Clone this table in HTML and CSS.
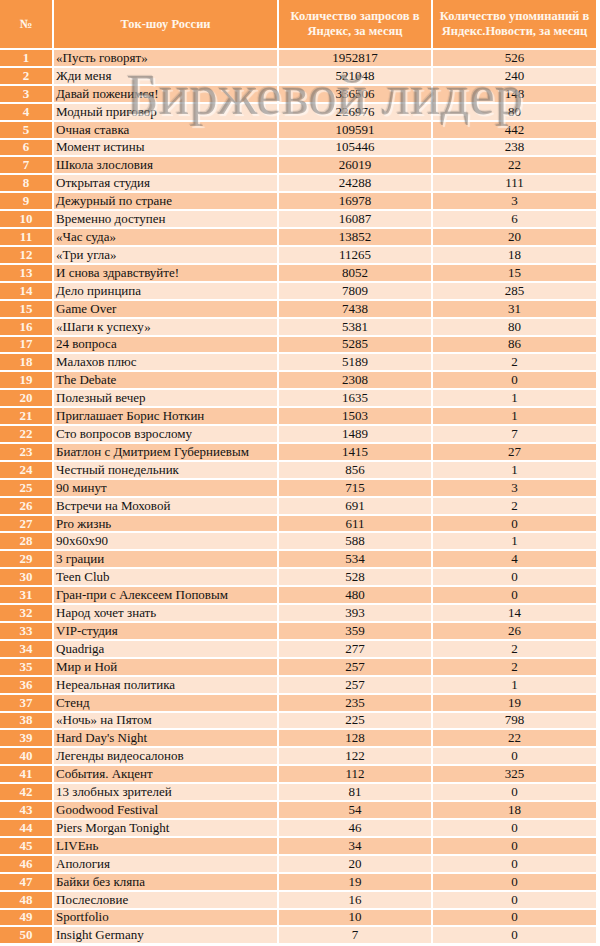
FILE: index.html
```html
<!DOCTYPE html>
<html lang="ru">
<head>
<meta charset="utf-8">
<title>Ток-шоу России</title>
<link rel="stylesheet" href="styles.css">
</head>
<body>
<div class="wrap">
  <div class="table" id="table">
    <div class="h">№</div>
    <div class="h">Ток-шоу России</div>
    <div class="h">Количество запросов в Яндекс, за месяц</div>
    <div class="h">Количество упоминаний в Яндекс.Новости, за месяц</div>
  </div>
  <div class="watermark">Биржевой лидер</div>
</div>
<script src="script.js"></script>
</body>
</html>
```
FILE: styles.css
```css
html, body { margin: 0; padding: 0; background: #fff; }
body { font-family: "Liberation Serif", "Times New Roman", serif; }
.wrap { position: relative; width: 600px; height: 946px; overflow: hidden; }
.table {
  display: grid;
  width: 596px;
  grid-template-columns: 52px 223px 152px 163px;
  grid-template-rows: 48px repeat(50, 15.92px);
  gap: 2px;
}
.h {
  background: #f79646;
  color: #fff6ec;
  font-weight: bold;
  font-size: 12.5px;
  line-height: 15px;
  display: flex;
  align-items: center;
  justify-content: center;
  text-align: center;
  padding: 0;
}
.c {
  font-size: 13px;
  line-height: 16px;
  color: #111;
  white-space: nowrap;
  display: flex;
  align-items: center;
  overflow: hidden;
}
.c.odd { background: #fbc9a4; }
.c.even { background: #fde4d2; }
.c.n {
  background: #f79646;
  color: #fff3e6;
  font-weight: bold;
  justify-content: center;
}
.c.t { padding-left: 2px; }
.c.v { justify-content: center; }
.watermark {
  position: absolute;
  left: 126px;
  top: 62px;
  font-family: "Liberation Serif", "Times New Roman", serif;
  font-size: 57px;
  color: rgba(105, 105, 105, 0.42);
  text-shadow: 2px 2px 1px rgba(255,255,255,0.55), -1px -1px 1px rgba(80,80,80,0.2);
  pointer-events: none;
  white-space: nowrap;
}
```
FILE: script.js
```js
const rows = [
["«Пусть говорят»",1952817,526],["Жди меня",521048,240],["Давай поженимся!",336506,148],["Модный приговор",226976,80],["Очная ставка",109591,442],["Момент истины",105446,238],["Школа злословия",26019,22],["Открытая студия",24288,111],["Дежурный по стране",16978,3],["Временно доступен",16087,6],["«Час суда»",13852,20],["«Три угла»",11265,18],["И снова здравствуйте!",8052,15],["Дело принципа",7809,285],["Game Over",7438,31],["«Шаги к успеху»",5381,80],["24 вопроса",5285,86],["Малахов плюс",5189,2],["The Debate",2308,0],["Полезный вечер",1635,1],["Приглашает Борис Ноткин",1503,1],["Сто вопросов взрослому",1489,7],["Биатлон с Дмитрием Губерниевым",1415,27],["Честный понедельник",856,1],["90 минут",715,3],["Встречи на Моховой",691,2],["Pro жизнь",611,0],["90x60x90",588,1],["3 грации",534,4],["Teen Club",528,0],["Гран-при с Алексеем Поповым",480,0],["Народ хочет знать",393,14],["VIP-студия",359,26],["Quadriga",277,2],["Мир и Ной",257,2],["Нереальная политика",257,1],["Стенд",235,19],["«Ночь» на Пятом",225,798],["Hard Day's Night",128,22],["Легенды видеосалонов",122,0],["События. Акцент",112,325],["13 злобных зрителей",81,0],["Goodwood Festival",54,18],["Piers Morgan Tonight",46,0],["LIVEнь",34,0],["Апология",20,0],["Байки без кляпа",19,0],["Послесловие",16,0],["Sportfolio",10,0],["Insight Germany",7,0]
];
const t = document.getElementById('table');
rows.forEach((r, i) => {
  const band = i % 2 === 0 ? 'odd' : 'even';
  const cells = [
    ['c n', String(i + 1)],
    ['c t ' + band, r[0]],
    ['c v ' + band, String(r[1])],
    ['c v ' + band, String(r[2])]
  ];
  cells.forEach(([cls, txt]) => {
    const d = document.createElement('div');
    d.className = cls;
    d.textContent = txt;
    t.appendChild(d);
  });
});
```
